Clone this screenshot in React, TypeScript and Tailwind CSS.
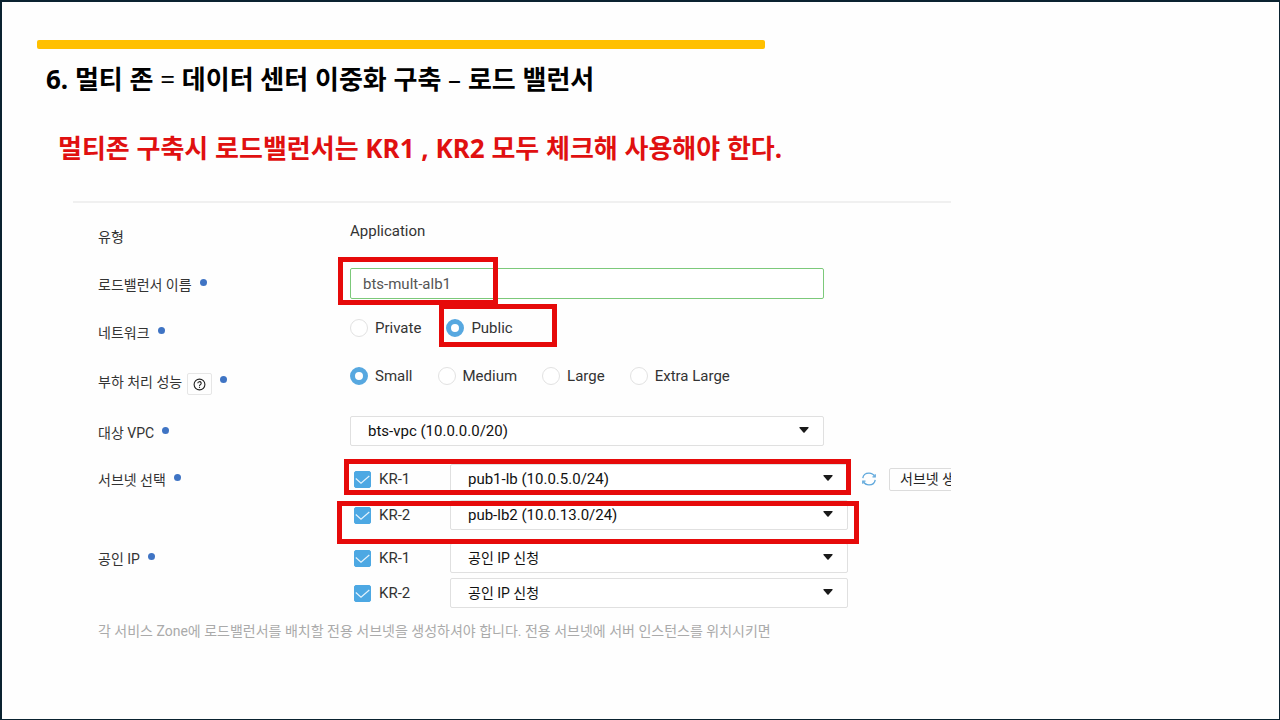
import { useState } from "react";
import type { ReactNode } from "react";

const NETWORKS = ["Private", "Public"];
const SIZES = ["Small", "Medium", "Large", "Extra Large"];

type RowProps = {
  label: string;
  required?: boolean;
  help?: boolean;
  className: string;
  labelClassName: string;
  children: ReactNode;
};

function Row({
  label,
  required,
  help,
  className,
  labelClassName,
  children,
}: RowProps) {
  return (
    <div className={`flex items-start ${className}`}>
      <div
        className={`flex w-[252px] shrink-0 items-start text-[14px] leading-6 text-[#333] ${labelClassName}`}
      >
        <span>{label}</span>
        {help && (
          <button
            type="button"
            aria-label="도움말"
            className="ml-[5px] mt-[3px] flex h-[22px] w-[25px] items-center justify-center rounded-xs border border-[#e6e6e6] text-[#222]"
          >
            <HelpIcon />
          </button>
        )}
        {required && (
          <span className="ml-2 mt-[6px] size-[7px] rounded-full bg-[#3f74c4]" />
        )}
      </div>
      <div className="min-w-0 flex-1">{children}</div>
    </div>
  );
}

function HelpIcon() {
  return (
    <svg width="13" height="13" viewBox="0 0 13 13" fill="none" stroke="currentColor">
      <circle cx="6.5" cy="6.5" r="5.4" strokeWidth="1.1" />
      <path d="M4.8 5.3a1.7 1.6 0 1 1 2.5 1.4c-.6.3-.8.6-.8 1.2" strokeWidth="1.1" />
      <path d="M6.5 8.7v1.2" strokeWidth="1.1" />
    </svg>
  );
}

function RefreshIcon() {
  return (
    <svg width="14" height="14" viewBox="0 0 14 14" fill="none" stroke="#5fa8dc" strokeWidth="1.3">
      <path d="M.8 6.200C1.200 3.200 3.700 1.200 7 1.200c2.500 0 4.500 1.100 5.500 3.200" />
      <path d="M13.200 7.800C12.800 10.800 10.300 12.800 7 12.800c-2.500 0-4.500-1.100-5.500-3.200" />
      <path d="M13.200 2.200v2.700h-2.700M.8 11.800V9.100h2.700" />
    </svg>
  );
}

// red frame drawn over the controls it points at
function Mark({ className }: { className: string }) {
  return (
    <span
      aria-hidden="true"
      className={`pointer-events-none absolute z-10 border-5 border-[#e60a0a] ${className}`}
    />
  );
}

function RadioGroup({
  name,
  options,
  initial,
  marked,
}: {
  name: string;
  options: string[];
  initial: string;
  marked?: string;
}) {
  const [value, setValue] = useState(initial);

  return (
    <div className="flex gap-[25px]">
      {options.map((option) => (
        <label
          key={option}
          className="relative flex h-6 items-center gap-[7px] text-[15px] text-[#333]"
        >
          <input
            type="radio"
            name={name}
            checked={value === option}
            onChange={() => setValue(option)}
            className="size-[18px] appearance-none rounded-full border border-[#e2e2e2] bg-white checked:border-5 checked:border-[#57a8e0]"
          />
          {option}
          {option === marked && (
            <Mark className="-left-[7px] -right-[44px] -top-3 h-[43px]" />
          )}
        </label>
      ))}
    </div>
  );
}

function Dropdown({
  label,
  value,
  className,
}: {
  label: string;
  value: string;
  className: string;
}) {
  return (
    <div className={`relative ${className}`}>
      <select
        aria-label={label}
        defaultValue={value}
        className="h-[30px] w-full appearance-none rounded-xs border border-[#e0e0e0] bg-white pl-[17px] pr-8 text-[#111]"
      >
        <option value={value}>{value}</option>
      </select>
      <svg
        width="10"
        height="6"
        viewBox="0 0 10 6"
        className="pointer-events-none absolute right-[15px] top-[11px]"
      >
        <path d="M.8 0h8.400q.8.300.3 1L5.600 5.500q-.6.500-1.200 0L.5 1Q0 .3.800 0z" fill="#1a1a1a" />
      </svg>
    </div>
  );
}

function ZoneLine({
  zone,
  label,
  value,
  textClassName,
  children,
}: {
  zone: string;
  label: string;
  value: string;
  textClassName: string;
  children?: ReactNode;
}) {
  const [on, setOn] = useState(true);

  return (
    <div className="relative flex h-[30px] items-center">
      <label className="ml-1 flex w-24 shrink-0 items-center gap-2 text-[15px] text-[#333]">
        <span className="relative flex">
          <input
            type="checkbox"
            checked={on}
            onChange={() => setOn(!on)}
            className="size-[17px] appearance-none rounded-xs border border-[#e0e0e0] checked:border-[#4da8e3] checked:bg-[#4da8e3]"
          />
          {on && (
            <svg
              viewBox="0 0 17 17"
              className="pointer-events-none absolute inset-0 size-[17px]"
              fill="none"
              stroke="#e4f3fd"
              strokeWidth="1.2"
            >
              <path d="M1.800 7.500 7 12.300 15.300 5" />
            </svg>
          )}
        </span>
        {zone}
      </label>
      <Dropdown
        label={`${label} ${zone}`}
        value={value}
        className={`w-full max-w-[398px] shrink-0 ${textClassName}`}
      />
      {children}
    </div>
  );
}

export default function App() {
  const [name, setName] = useState("bts-mult-alb1");

  return (
    <main className="min-h-screen border-2 border-r-1 border-b-1 border-[#0a2230] bg-[#fefefe] pb-16 font-['Roboto','Noto_Sans_CJK_KR',sans-serif]">
      <div className="ml-[35px] mt-[38px] h-[9px] w-[57%] rounded-xs bg-[#ffc000]" />
      <h1 className="ml-[44px] mt-[10px] font-['Noto_Sans','Noto_Sans_CJK_KR',sans-serif] text-[26px] font-bold leading-10 text-black">
        6. 멀티 존 <span className="font-normal">=</span> 데이터 센터 이중화 구축{" "}
        <span className="font-normal">–</span> 로드 밸런서
      </h1>
      <p className="ml-[56px] mt-[29px] font-['Noto_Sans','Noto_Sans_CJK_KR',sans-serif] text-[26px] font-bold leading-10 text-[#e01010]">
        멀티존 구축시 로드밸런서는 KR1 , KR2 모두 체크해 사용해야 한다.
      </p>

      <form className="ml-[71px] mt-[33px] w-full max-w-[878px] overflow-hidden border-t-2 border-[#f0f0f0] pl-[25px] pt-4">
        <Row label="유형" className="min-h-[49px]" labelClassName="pt-[6px]">
          <p className="text-[15px] leading-6 text-[#333]">Application</p>
        </Row>

        <Row
          label="로드밸런서 이름"
          required
          className="min-h-[48px]"
          labelClassName="pt-[5px]"
        >
          <div className="relative max-w-[474px]">
            <input
              type="text"
              aria-label="로드밸런서 이름"
              value={name}
              onChange={(e) => setName(e.target.value)}
              className="block h-[31px] w-full rounded-xs border border-[#7cc97a] bg-white px-3 text-[15px] text-[#555]"
            />
            <Mark className="-left-3 -top-[11px] h-[48px] w-[160px]" />
          </div>
        </Row>

        <Row
          label="네트워크"
          required
          className="min-h-[48px]"
          labelClassName="pt-[5px]"
        >
          <RadioGroup
            name="network"
            options={NETWORKS}
            initial="Public"
            marked="Public"
          />
        </Row>

        <Row
          label="부하 처리 성능"
          required
          help
          className="min-h-[52px]"
          labelClassName="pt-[6px]"
        >
          <RadioGroup name="size" options={SIZES} initial="Small" />
        </Row>

        <Row
          label="대상 VPC"
          required
          className="min-h-[48px]"
          labelClassName="pt-[5px]"
        >
          <Dropdown
            label="대상 VPC"
            value="bts-vpc (10.0.0.0/20)"
            className="max-w-[474px] text-[15px]"
          />
        </Row>

        <Row
          label="서브넷 선택"
          required
          className="min-h-[79px]"
          labelClassName="pt-1"
        >
          <div className="space-y-[6px]">
            <ZoneLine
              zone="KR-1"
              label="서브넷"
              value="pub1-lb (10.0.5.0/24)"
              textClassName="text-[15px]"
            >
              <button type="button" aria-label="새로고침" className="ml-[14px] shrink-0">
                <RefreshIcon />
              </button>
              <button
                type="button"
                className="ml-[13px] h-[23px] shrink-0 whitespace-nowrap rounded-xs border border-[#dcdcdc] px-[10px] text-[14px] leading-5 text-[#222]"
              >
                서브넷 생성
              </button>
              <Mark className="-left-[6px] -top-[5px] h-[36px] w-[507px]" />
            </ZoneLine>
            <ZoneLine
              zone="KR-2"
              label="서브넷"
              value="pub-lb2 (10.0.13.0/24)"
              textClassName="text-[15px]"
            >
              <Mark className="-left-[13px] top-px h-[43px] w-[522px]" />
            </ZoneLine>
          </div>
        </Row>

        <Row
          label="공인 IP"
          required
          className="min-h-[76px]"
          labelClassName="pt-1"
        >
          <div className="space-y-[5px]">
            <ZoneLine
              zone="KR-1"
              label="공인 IP"
              value="공인 IP 신청"
              textClassName="text-[14px]"
            />
            <ZoneLine
              zone="KR-2"
              label="공인 IP"
              value="공인 IP 신청"
              textClassName="text-[14px]"
            />
          </div>
        </Row>

        <p className="text-[14px] leading-6 text-[#aaa]">
          각 서비스 Zone에 로드밸런서를 배치할 전용 서브넷을 생성하셔야 합니다.
          전용 서브넷에 서버 인스턴스를 위치시키면
        </p>
      </form>
    </main>
  );
}
